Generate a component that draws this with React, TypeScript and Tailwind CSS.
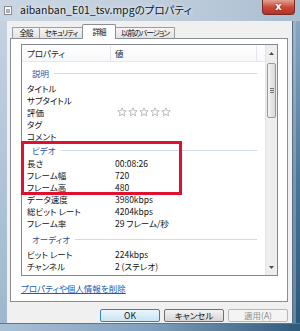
import React from "react";

// Windows 7 style "properties" dialog, Details tab, with a red annotation box.

const FONT = "font-['Noto_Sans_CJK_JP','Noto_Sans',sans-serif] [font-feature-settings:'palt']";

type Row = { label: string; value?: React.ReactNode };

const descRows: Row[] = [
  { label: "タイトル" },
  { label: "サブタイトル" },
  { label: "評価", value: <Stars /> },
  { label: "タグ" },
  { label: "コメント" },
];

const videoRows: Row[] = [
  { label: "長さ", value: "00:08:26" },
  { label: "フレーム幅", value: "720" },
  { label: "フレーム高", value: "480" },
  { label: "データ速度", value: "3980kbps" },
  { label: "総ビット レート", value: "4204kbps" },
  { label: "フレーム率", value: "29 フレーム/秒" },
];

const audioRows: Row[] = [
  { label: "ビット レート", value: "224kbps" },
  { label: "チャンネル", value: "2 (ステレオ)" },
  { label: "オーディオ サンプル レート", value: "48 kHz" },
];

function Stars() {
  return (
    <div className="ml-[2px] flex gap-[1px]">
      {[0, 1, 2, 3, 4].map((i) => (
        <svg key={i} width="10" height="10" viewBox="0 0 10 10">
          <path
            d="M5 0.8 L6.2 3.6 L9.2 3.8 L6.9 5.8 L7.6 8.9 L5 7.3 L2.4 8.9 L3.1 5.8 L0.8 3.8 L3.8 3.6 Z"
            fill="#fcfcfc"
            stroke="#a9adb3"
            strokeWidth="0.8"
            strokeLinejoin="round"
          />
        </svg>
      ))}
    </div>
  );
}

function Section({ title, pt, h }: { title: string; pt: string; h: string }) {
  return (
    <div className={`flex shrink-0 items-start pl-[10px] pr-[8px] ${pt} ${h}`}>
      <div className="flex h-[12px] w-full items-center gap-[5px]">
        <span className="leading-[12px] text-[#2f4f9e]">{title}</span>
        <div className="h-px flex-1 bg-[#cfdbe8]" />
      </div>
    </div>
  );
}

function Rows({ rows }: { rows: Row[] }) {
  return (
    <>
      {rows.map((r) => (
        <div key={r.label} className="flex h-[12px] shrink-0 items-center pl-[5px] leading-[12px] text-[#111]">
          <span className="w-[88px] shrink-0 overflow-hidden whitespace-nowrap pr-[2px]">{r.label}</span>
          <span className="whitespace-nowrap">{r.value}</span>
        </div>
      ))}
    </>
  );
}

function ScrollBar() {
  return (
    <div className="flex w-[12px] flex-col border-l border-[#e4e4e4] bg-[#eeeeee]">
      <div className="flex h-[17px] items-center justify-center">
        <svg width="5" height="3" viewBox="0 0 5 3">
          <path d="M0 3 L2.5 0 L5 3 Z" fill="#4d4d4d" />
        </svg>
      </div>
      <div className="mx-[1px] mt-[1px] flex h-[55px] flex-col items-center justify-center gap-[1px] rounded-[2px] border border-[#9a9a9a] bg-gradient-to-r from-[#f4f4f4] to-[#d9d9d9]">
        <div className="h-px w-[4px] bg-[#6f6f6f]" />
        <div className="h-px w-[4px] bg-[#6f6f6f]" />
        <div className="h-px w-[4px] bg-[#6f6f6f]" />
      </div>
      <div className="flex-1" />
      <div className="flex h-[16px] items-center justify-center">
        <svg width="5" height="3" viewBox="0 0 5 3">
          <path d="M0 0 L2.5 3 L5 0 Z" fill="#4d4d4d" />
        </svg>
      </div>
    </div>
  );
}

function Tab({ label, w, active }: { label: string; w: string; active?: boolean }) {
  return active ? (
    <div
      className={`relative z-10 -mb-px -ml-px flex h-[15px] ${w} items-center justify-center whitespace-nowrap rounded-t-[2px] border border-b-0 border-[#8a8e94] bg-white text-[#111]`}
    >
      {label}
    </div>
  ) : (
    <div
      className={`-ml-px flex h-[11px] ${w} items-center justify-center whitespace-nowrap rounded-t-[1px] border border-b-0 border-[#9a9ea4] bg-gradient-to-b from-[#f5f5f5] to-[#e2e2e2] text-[#111] first:ml-0`}
    >
      {label}
    </div>
  );
}

function Button({ label, variant }: { label: string; variant?: "default" | "disabled" }) {
  const cls =
    variant === "default"
      ? "border-[#3c7fb1] bg-gradient-to-b from-[#eaf6fd] to-[#c7e4f5] text-[#111]"
      : variant === "disabled"
      ? "border-[#b5b8bb] bg-[#f4f4f4] text-[#8d8d8d]"
      : "border-[#707070] bg-gradient-to-b from-[#f3f3f3] to-[#d6d6d6] text-[#111]";
  return (
    <div className={`flex h-[13px] w-[60px] items-center justify-center rounded-[2px] border ${cls}`}>
      {label}
    </div>
  );
}

export default function App() {
  return (
    <div className={`relative flex h-[331px] w-[300px] flex-col overflow-hidden text-[8.5px] leading-none ${FONT}`}>
      {/* Title bar */}
      <div className="relative flex h-[21px] items-center bg-gradient-to-r from-[#c9d6e3] via-[#c1cfdd] to-[#a9bdd1] pl-[4px]">
        <div className="flex h-[9px] w-[8px] items-start justify-center border border-[#8a8a8a] bg-white">
          <div className="mt-[2px] h-[4px] w-[4px] bg-[#9fb0c4]" />
        </div>
        <span className="ml-[8px] text-[10.5px] text-[#161616] [text-shadow:0_0_4px_#ffffff]">
          aibanban_E01_tsv.mpgのプロパティ
        </span>
        <div className="absolute right-[5px] top-0 flex h-[15px] w-[33px] items-center justify-center rounded-b-[4px] border border-t-0 border-[#7a2a24] bg-gradient-to-b from-[#e4a091] via-[#c9493a] to-[#b53323]">
          <span className="font-['DejaVu_Sans',sans-serif] text-[10px] font-bold text-white [text-shadow:0_0_2px_#5a1a12]">
            x
          </span>
        </div>
      </div>

      <div className="flex flex-1">
        {/* Left frame */}
        <div className="w-[7px] bg-gradient-to-b from-[#c4d2e0] to-[#9fb7cd]" />

        {/* Window body */}
        <div className="flex w-[285px] flex-col bg-[#f0f0f0] pl-[3px] pt-[3px]">
          {/* Tabs */}
          <div className="flex h-[14px] items-end pl-[2px] text-[7.5px] tracking-[-1px]">
            <Tab label="全般" w="w-[28px]" />
            <Tab label="セキュリティ" w="w-[44px]" />
            <Tab label="詳細" w="w-[34px]" active />
            <Tab label="以前のバージョン" w="w-[60px]" />
          </div>

          {/* Tab panel */}
          <div className="flex h-[264px] w-[278px] flex-col border border-[#8a8e94] bg-white px-[10px] pt-[5px]">
            <div className="relative flex h-[232px] w-[257px] overflow-hidden border border-[#828790]">
              <div className="flex flex-1 flex-col overflow-hidden">
                {/* Column header */}
                <div className="flex h-[17px] shrink-0 items-center border-b border-[#e5e9ee] bg-gradient-to-b from-white to-[#f7f8fa] pl-[5px] leading-[12px] text-[#222]">
                  <span className="w-[83px]">プロパティ</span>
                  <div className="h-[15px] w-px bg-[#e3e6ea]" />
                  <span className="pl-[4px]">値</span>
                  <div className="ml-auto mr-[8px] h-[15px] w-px bg-[#e3e6ea]" />
                </div>
                <Section title="説明" pt="pt-[5px]" h="h-[20px]" />
                <Rows rows={descRows} />
                <Section title="ビデオ" pt="pt-[2px]" h="h-[15px]" />
                <Rows rows={videoRows} />
                <Section title="オーディオ" pt="pt-[4px]" h="h-[19px]" />
                <Rows rows={audioRows} />
              </div>
              <ScrollBar />
            </div>

            <div className="mt-[6px] leading-[12px] text-[#1c5bb8] underline decoration-[#1c5bb8]">
              プロパティや個人情報を削除
            </div>
          </div>

          {/* Buttons */}
          <div className="mt-[7px] flex gap-[4px] pl-[90px]">
            <Button label="OK" variant="default" />
            <Button label="キャンセル" />
            <Button label="適用(A)" variant="disabled" />
          </div>
        </div>

        {/* Right frame */}
        <div className="flex w-[8px] bg-gradient-to-b from-[#8aa6c0] via-[#4f7898] to-[#2e5878]">
          <div className="w-px bg-[#5a6f84]" />
          <div className="w-[3px] bg-[#b7c9da]/40" />
        </div>
      </div>

      {/* Bottom frame */}
      <div className="h-[8px] border-t border-[#4b7ba6] bg-gradient-to-r from-[#a9c0d6] via-[#7f9fbd] to-[#2f5a7c]" />

      {/* Red annotation box */}
      <div className="absolute left-[21px] top-[141px] h-[54px] w-[161px] border-[3px] border-[#e0112e]" />
    </div>
  );
}
